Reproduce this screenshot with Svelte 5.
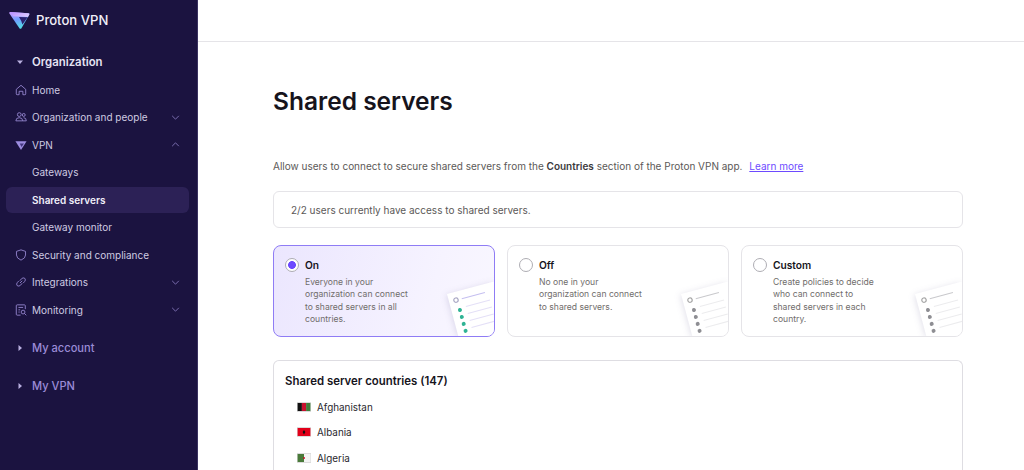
<script>
  const options = [
    { title: 'On', text: 'Everyone in your organization can connect to shared servers in all countries.', on: true },
    { title: 'Off', text: 'No one in your organization can connect to shared servers.', on: false },
    { title: 'Custom', text: 'Create policies to decide who can connect to shared servers in each country.', on: false }
  ];
  const dots = [0, 1, 2, 3];
</script>

<div class="page">
  <aside class="side">
    <div class="brand">
      <svg class="logo" viewBox="0 0 21 19" width="21" height="19">
        <defs>
          <linearGradient id="lg" x1="0.2" y1="0" x2="0.65" y2="1">
            <stop offset="0" stop-color="#c39bff" />
            <stop offset="0.45" stop-color="#6f9dff" />
            <stop offset="1" stop-color="#4fe6e0" />
          </linearGradient>
          <linearGradient id="lg2" x1="0" y1="0" x2="1" y2="0.4">
            <stop offset="0" stop-color="#b78cff" />
            <stop offset="1" stop-color="#d9c6ff" />
          </linearGradient>
        </defs>
        <path d="M1.2 1 L19.4 2.2 Q21 2.4 20.2 3.8 L12.6 17 Q11.6 18.6 10.4 17.2 L0.4 2.6 Q-0.2 1 1.2 1 Z" fill="url(#lg)" />
        <path d="M1.2 1 L19.4 2.2 Q21 2.4 20.2 3.8 L19 6 L4.5 5.2 Z" fill="url(#lg2)" />
        <path d="M10 6 L18.6 6.3 L13.4 13.4 Q12.4 9.5 10 6 Z" fill="#2c2270" />
      </svg>
      <span class="brand-name">Proton VPN</span>
    </div>

    <div class="section-head strong">
      <svg class="caret" viewBox="0 0 8 8" width="8" height="8"><path d="M1 2.5 H7 L4 6 Z" fill="#b9b0e0" /></svg>
      <span>Organization</span>
    </div>

    <nav class="nav">
      <div class="row">
        <svg class="ic" viewBox="0 0 14 14"><path d="M1.5 6.2 L7 1.5 L12.5 6.2 V11.5 Q12.5 12.5 11.5 12.5 H9.2 V8.5 H4.8 V12.5 H2.5 Q1.5 12.5 1.5 11.5 Z" /></svg>
        <span>Home</span>
      </div>
      <div class="row">
        <svg class="ic" viewBox="0 0 14 14"><circle cx="5" cy="4.2" r="2.2" /><path d="M1 11.5 Q1 7.8 5 7.8 Q9 7.8 9 11.5 Z" /><circle cx="10.2" cy="4.6" r="1.7" /><path d="M10 7.8 Q13.2 7.8 13.2 11.5 H9" /></svg>
        <span>Organization and people</span>
        <svg class="chev" viewBox="0 0 10 6"><path d="M1 1 L5 5 L9 1" /></svg>
      </div>
      <div class="row">
        <svg class="ic" viewBox="0 0 14 14"><path d="M0.5 2.5 H13.5 L7 12.8 Z" fill="#9d8de0" stroke="none" /><path d="M5.5 5.2 H10.5 L7.6 9.4 Z" fill="#43367f" stroke="none" /></svg>
        <span>VPN</span>
        <svg class="chev" viewBox="0 0 10 6"><path d="M1 5 L5 1 L9 5" /></svg>
      </div>
      <div class="row sub">Gateways</div>
      <div class="row sub active">Shared servers</div>
      <div class="row sub">Gateway monitor</div>
      <div class="row">
        <svg class="ic" viewBox="0 0 14 14"><path d="M7 1 L12.3 2.8 V7 Q12.3 10.8 7 13 Q1.7 10.8 1.7 7 V2.8 Z" /></svg>
        <span>Security and compliance</span>
      </div>
      <div class="row">
        <svg class="ic" viewBox="0 0 14 14"><path d="M5.8 8.2 L8.4 5.6" /><path d="M5.6 5.6 L7.6 3.2 Q9.4 1.4 11.4 2.7 Q13 4.6 11.2 6.5 L9.6 8.2" /><path d="M8.4 8.4 L6.4 10.8 Q4.6 12.6 2.6 11.3 Q1 9.4 2.8 7.5 L4.4 5.8" /></svg>
        <span>Integrations</span>
        <svg class="chev" viewBox="0 0 10 6"><path d="M1 1 L5 5 L9 1" /></svg>
      </div>
      <div class="row">
        <svg class="ic" viewBox="0 0 14 14"><path d="M6.5 13 H2.5 Q1.5 13 1.5 12 V2 Q1.5 1 2.5 1 H11 Q12 1 12 2 V6" /><path d="M4 4 H9.5 M4 6.8 H6 M4 9.4 H5.5" /><circle cx="9.4" cy="9.4" r="2.2" /><path d="M11 11 L13.2 13.2" /></svg>
        <span>Monitoring</span>
        <svg class="chev" viewBox="0 0 10 6"><path d="M1 1 L5 5 L9 1" /></svg>
      </div>
    </nav>

    <div class="section-head muted first">
      <svg class="caret" viewBox="0 0 8 8" width="8" height="8"><path d="M2.5 1 V7 L6 4 Z" fill="#b9b0e0" /></svg>
      <span>My account</span>
    </div>
    <div class="section-head muted">
      <svg class="caret" viewBox="0 0 8 8" width="8" height="8"><path d="M2.5 1 V7 L6 4 Z" fill="#b9b0e0" /></svg>
      <span>My VPN</span>
    </div>
  </aside>

  <div class="right">
    <header class="top"></header>
    <main class="main">
      <h1>Shared servers</h1>
      <p class="lead">Allow users to connect to secure shared servers from the <b>Countries</b> section of the Proton VPN app. <a href="#learn">Learn more</a></p>
      <div class="status">2/2 users currently have access to shared servers.</div>

      <div class="cards">
        {#each options as o}
          <div class="card" class:on={o.on}>
            <span class="radio"></span>
            <div class="copy">
              <div class="title">{o.title}</div>
              <div class="desc">{o.text}</div>
            </div>
            <svg class="art" viewBox="0 0 50 57" width="50" height="57">
              <g transform="translate(3 15) rotate(-15)">
                <rect class="sheet" x="0" y="0" width="70" height="70" />
                <circle cx="7.1" cy="8.2" r="2.2" fill="none" stroke={o.on ? '#a9a7c4' : '#a6a6a6'} stroke-width="1.2" />
                <path d="M13 8.4 H37" stroke={o.on ? '#c5bff0' : '#c9c9cc'} stroke-width="1" />
                {#each dots as d}
                  <circle cx="8.4" cy={18.8 + d * 7.2} r="2" fill={o.on ? '#2fb394' : '#8e8e93'} />
                  <path d="M15 {17 + d * 7.2} H40" stroke={o.on ? '#e4e0f7' : '#ececee'} stroke-width="1" />
                {/each}
              </g>
            </svg>
          </div>
        {/each}
      </div>

      <section class="countries">
        <h2>Shared server countries (147)</h2>
        <div class="country">
          <svg class="flag" viewBox="0 0 14 10"><rect width="14" height="10" fill="#dcdcdc" /><rect x="0.6" y="1" width="4.3" height="8" fill="#111" /><rect x="4.9" y="1" width="4.2" height="8" fill="#c8102e" /><rect x="9.1" y="1" width="4.3" height="8" fill="#3f7d3a" /></svg>
          <span>Afghanistan</span>
        </div>
        <div class="country">
          <svg class="flag" viewBox="0 0 14 10"><rect width="14" height="10" fill="#dcdcdc" /><rect x="0.6" y="1" width="12.8" height="8" fill="#e2001a" /><path d="M7 3 L8.4 5 L7 7.4 L5.6 5 Z" fill="#111" /></svg>
          <span>Albania</span>
        </div>
        <div class="country">
          <svg class="flag" viewBox="0 0 14 10"><rect width="14" height="10" fill="#dcdcdc" /><rect x="0.6" y="1" width="6.4" height="8" fill="#4a7a3a" /><rect x="7" y="1" width="6.4" height="8" fill="#f4f4f4" /><circle cx="7" cy="5" r="1" fill="#c8102e" /></svg>
          <span>Algeria</span>
        </div>
      </section>
    </main>
  </div>
</div>

<style>
  :global(body) { margin: 0; font-family: Inter, "Noto Sans", sans-serif; }
  .page { display: flex; height: 470px; overflow: hidden; background: #fff; }

  .side { width: 197px; flex: none; background: #1b1340; border-right: 1px solid #3a3260; color: #cfcbe2; font-size: 10px; }
  .brand { display: flex; align-items: center; gap: 6px; height: 41px; padding-left: 9px; }
  .brand-name { color: #f1eff9; font-size: 13.1px; font-weight: 500; margin-top: -1px; }

  .section-head { display: flex; align-items: center; padding-left: 16px; gap: 8px; height: 20px; }
  .strong { margin-top: 10.5px; color: #e6e3f3; font-size: 11.4px; font-weight: 600; }
  .muted { color: #9a8bd6; font-size: 11.1px; font-weight: 500; margin-top: 18px; }
  .muted.first { margin-top: 14.5px; }

  .nav { display: flex; flex-direction: column; padding: 5px 8px 0 6px; gap: 1px; }
  .row { display: flex; align-items: center; height: 26.5px; padding-left: 9px; gap: 5px; border-radius: 6px; }
  .row span { flex: 1; }
  .sub { padding-left: 26px; }
  .active { background: #2c2156; color: #f1eff9; font-weight: 600; }
  .ic { width: 12px; height: 12px; fill: none; stroke: #9a8bd6; stroke-width: 1; flex: none; }
  .chev { width: 9px; height: 5px; fill: none; stroke: #8d80c4; stroke-width: 1; margin-right: 9px; flex: none; }

  .right { flex: 1; min-width: 0; display: flex; flex-direction: column; }
  .top { height: 41px; border-bottom: 1px solid #e5e4e8; flex: none; }
  .main { padding: 0 61px 0 75px; color: #0c0c14; }

  h1 { margin: 42px 0 0; font-size: 24.5px; line-height: 34px; font-weight: 600; color: #16141c; }
  .lead { margin: 40px 0 0; font-size: 10px; line-height: 16px; color: #5c5958; }
  .lead b { font-weight: 600; color: #3c3a40; }
  .lead a { color: #6d4aff; margin-left: 4px; text-decoration: underline; }

  .status { margin-top: 17px; height: 37px; box-sizing: border-box; border: 1px solid #e5e4e8; border-radius: 6px; display: flex; align-items: center; padding-left: 17px; font-size: 10px; color: #5c5958; }

  .cards { display: grid; grid-template-columns: repeat(3, 1fr); gap: 12px; margin-top: 17px; }
  .card { position: relative; overflow: hidden; height: 92px; box-sizing: border-box; border: 1px solid #e5e4e8; border-radius: 8px; padding: 12px 11px; display: flex; gap: 6px; background: #fff; }
  .card.on { border-color: #8f7cf5; background: linear-gradient(105deg, #ebe6fe 0%, #f6f3ff 70%, #f9f7ff 100%); }
  .radio { width: 14px; height: 14px; box-sizing: border-box; flex: none; border-radius: 50%; border: 1px solid #aeadb3; background: #fff; }
  .on .radio { background: radial-gradient(circle, #6d4aff 0 3.6px, #fff 4.2px); }
  .copy { width: 108px; }
  .title { font-size: 10.2px; line-height: 14px; font-weight: 600; color: #17151c; }
  .desc { margin-top: 4px; font-size: 8.6px; line-height: 12.4px; color: #706d6b; }
  .art { position: absolute; right: 0; bottom: 0; filter: drop-shadow(-1px 1px 3px rgba(60, 50, 110, 0.14)); }
  .sheet { fill: #fff; }

  .countries { margin-top: 23px; border: 1px solid #dedde2; border-bottom: none; border-radius: 6px 6px 0 0; padding: 11.5px 11px 0; height: 120px; }
  h2 { margin: 0; font-size: 11.4px; line-height: 16px; font-weight: 600; color: #16141c; }
  .country { display: flex; align-items: center; gap: 6px; height: 25.5px; padding-left: 12px; font-size: 9.9px; color: #2a282e; }
  .countries h2 + .country { margin-top: 5.5px; }
  .flag { width: 14px; height: 10px; flex: none; }
</style>
